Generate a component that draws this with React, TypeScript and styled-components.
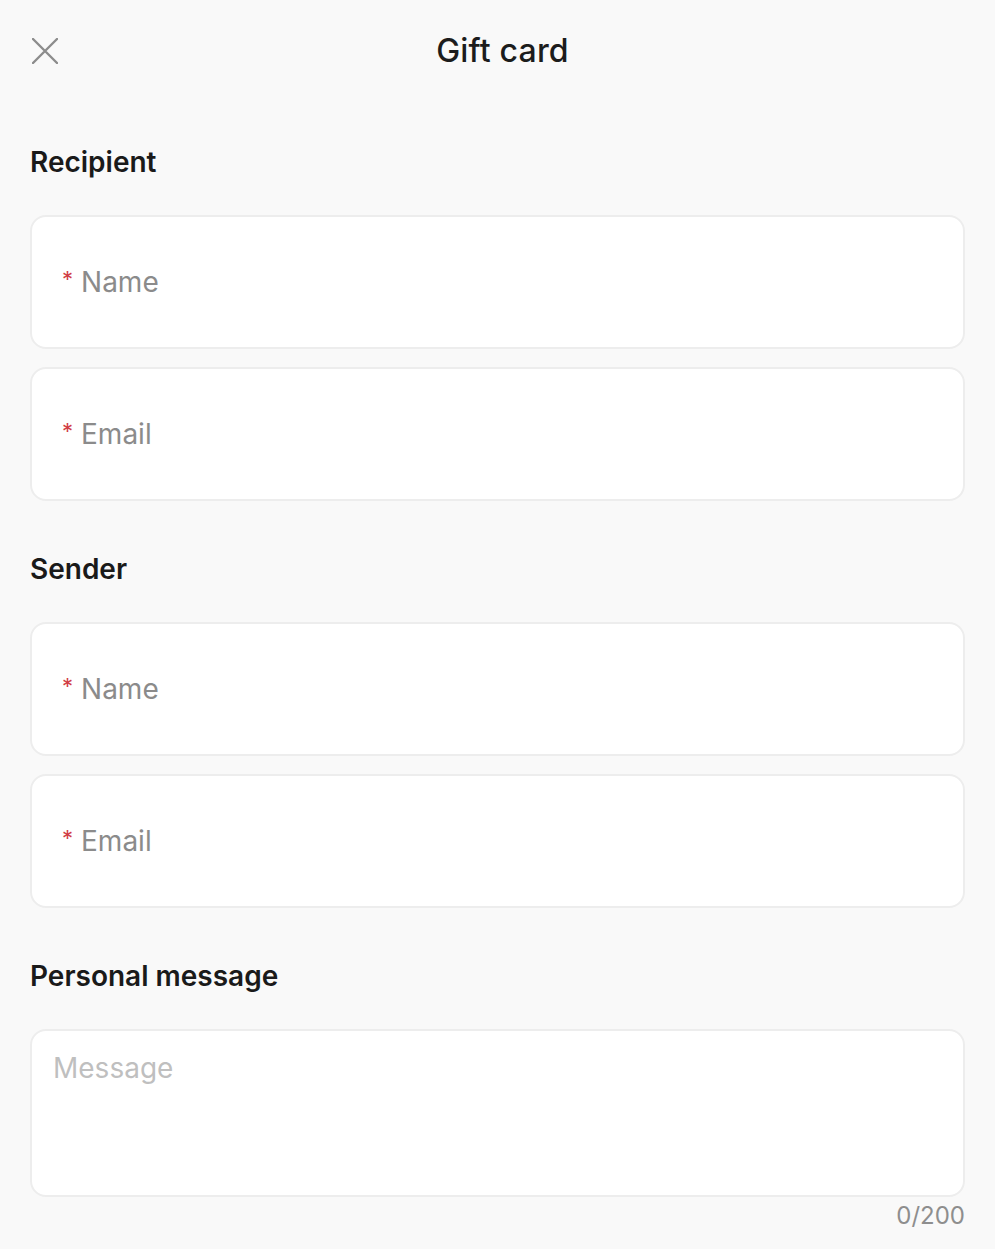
import React from 'react';
import styled, { createGlobalStyle } from 'styled-components';

const GlobalStyle = createGlobalStyle`
  html, body {
    margin: 0;
    padding: 0;
    background: #f9f9f9;
  }
  body {
    font-family: Inter, "Noto Sans", sans-serif;
    color: #1c1c1c;
  }
`;

const Page = styled.div`
  padding: 0 30px 20px;
  min-height: 1249px;
  box-sizing: border-box;
`;

const Header = styled.header`
  height: 101px;
  display: grid;
  grid-template-columns: 1fr auto 1fr;
  align-items: center;
`;

const CloseButton = styled.button`
  justify-self: start;
  width: 30px;
  height: 30px;
  padding: 0;
  border: none;
  background: none;
  display: flex;
  align-items: center;
  justify-content: center;
  cursor: pointer;
`;

const Title = styled.h1`
  margin: 0 0 0 10px;
  font-size: 32px;
  line-height: 40px;
  font-weight: 500;
  color: #1c1c1c;
  letter-spacing: 0.2px;
`;

const Section = styled.section`
  & + & h2 {
    margin-top: 52px;
  }
`;

const SectionTitle = styled.h2`
  margin: 45px 0 37px;
  font-size: 28px;
  line-height: 32px;
  font-weight: 600;
  color: #1a1a1a;
`;

const Fields = styled.div`
  display: flex;
  flex-direction: column;
  gap: 18px;
`;

const FieldBox = styled.label`
  height: 134px;
  box-sizing: border-box;
  display: flex;
  align-items: center;
  padding: 0 30px;
  background: #fff;
  border: 2px solid #ededed;
  border-radius: 16px;
`;

const Required = styled.span`
  color: #d13d45;
  font-size: 22px;
  line-height: 1;
  margin-right: 8px;
  transform: translateY(-3px);
`;

const TextInput = styled.input`
  flex: 1;
  border: none;
  outline: none;
  background: transparent;
  padding: 0;
  font-family: inherit;
  font-size: 28px;
  color: #1c1c1c;

  &::placeholder {
    color: #8b8b8b;
  }
`;

const MessageArea = styled.textarea`
  display: block;
  width: 100%;
  height: 168px;
  box-sizing: border-box;
  resize: none;
  padding: 21px 21px;
  background: #fff;
  border: 2px solid #ededed;
  border-radius: 16px;
  outline: none;
  font-family: inherit;
  font-size: 28px;
  line-height: 32px;
  color: #1c1c1c;

  &::placeholder {
    color: #bfbfbf;
  }
`;

const Counter = styled.div`
  margin-top: 5px;
  text-align: right;
  font-size: 24px;
  line-height: 28px;
  color: #8e8e8e;
`;

const CloseIcon = () => (
  <svg width="26" height="26" viewBox="0 0 26 26" fill="none">
    <path d="M1 1L25 25M25 1L1 25" stroke="#8c8c8c" strokeWidth="2.4" strokeLinecap="round" />
  </svg>
);

const Field: React.FC<{ placeholder: string }> = ({ placeholder }) => (
  <FieldBox>
    <Required>*</Required>
    <TextInput placeholder={placeholder} />
  </FieldBox>
);

export default function App() {
  return (
    <>
      <GlobalStyle />
      <Page>
        <Header>
          <CloseButton aria-label="Close">
            <CloseIcon />
          </CloseButton>
          <Title>Gift card</Title>
          <span />
        </Header>

        <Section>
          <SectionTitle>Recipient</SectionTitle>
          <Fields>
            <Field placeholder="Name" />
            <Field placeholder="Email" />
          </Fields>
        </Section>

        <Section>
          <SectionTitle>Sender</SectionTitle>
          <Fields>
            <Field placeholder="Name" />
            <Field placeholder="Email" />
          </Fields>
        </Section>

        <Section>
          <SectionTitle>Personal message</SectionTitle>
          <MessageArea placeholder="Message" />
          <Counter>0/200</Counter>
        </Section>
      </Page>
    </>
  );
}
